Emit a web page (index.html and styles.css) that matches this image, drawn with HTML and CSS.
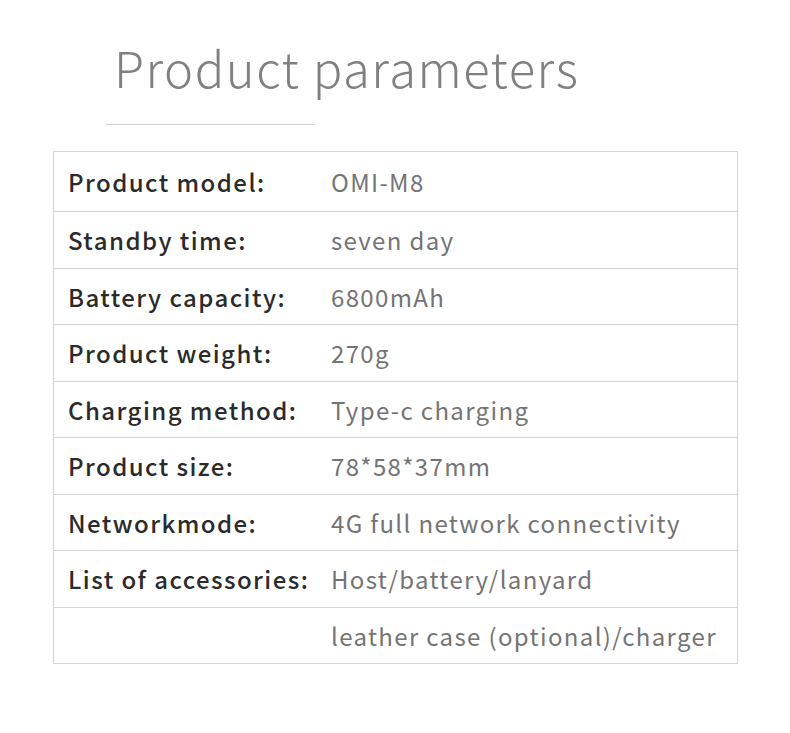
FILE: index.html
```html
<!DOCTYPE html>
<html>
<head>
<meta charset="utf-8">
<link rel="stylesheet" href="styles.css">
</head>
<body>
<div class="page">
  <h1 class="title">Product parameters</h1>
  <div class="rule"></div>
  <div class="table">
    <div class="row first"><div class="label">Product model:</div><div class="value">OMI-M8</div></div>
    <div class="row"><div class="label">Standby time:</div><div class="value">seven day</div></div>
    <div class="row"><div class="label">Battery capacity:</div><div class="value">6800mAh</div></div>
    <div class="row"><div class="label">Product weight:</div><div class="value">270g</div></div>
    <div class="row"><div class="label">Charging method:</div><div class="value">Type-c charging</div></div>
    <div class="row"><div class="label">Product size:</div><div class="value">78*58*37mm</div></div>
    <div class="row"><div class="label">Networkmode:</div><div class="value">4G full network connectivity</div></div>
    <div class="row"><div class="label">List of accessories:</div><div class="value">Host/battery/lanyard</div></div>
    <div class="row last"><div class="label"></div><div class="value">leather case (optional)/charger</div></div>
  </div>
</div>
</body>
</html>
```
FILE: styles.css
```css
html, body {
  margin: 0;
  padding: 0;
  background: #ffffff;
}
.page {
  width: 790px;
  height: 733px;
  font-family: "Noto Sans CJK SC", "Source Sans Pro", sans-serif;
  padding-top: 37px;
  box-sizing: border-box;
}
.title {
  margin: 0 0 0 114px;
  font-weight: 300;
  font-size: 49px;
  line-height: 60px;
  letter-spacing: 1.5px;
  color: #808080;
}
.rule {
  margin: 27px 0 0 106px;
  width: 209px;
  height: 1px;
  background: #d0d0d0;
}
.table {
  margin: 26px 0 0 53px;
  width: 685px;
  box-sizing: border-box;
  border: 1px solid #d4d4d4;
}
.row {
  display: grid;
  grid-template-columns: 263px 1fr;
  align-items: center;
  height: 55.5px;
  border-bottom: 1px solid #d4d4d4;
}
.row.first {
  height: 59px;
}
.row.last {
  border-bottom: none;
  height: 55px;
}
.label {
  padding-left: 14px;
  font-size: 24px;
  letter-spacing: 1.45px;
  color: #2b2b2b;
  font-weight: 500;
}
.value {
  padding-left: 14px;
  font-size: 24px;
  letter-spacing: 1.35px;
  color: #747474;
  font-weight: 400;
}
```
